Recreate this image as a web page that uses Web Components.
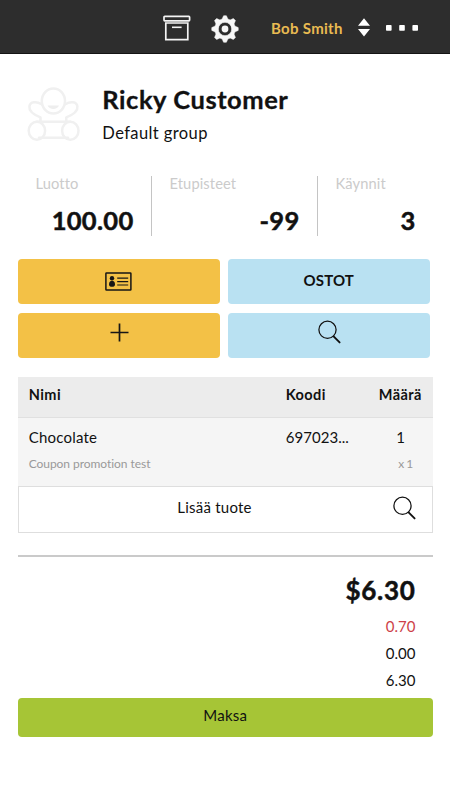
<!DOCTYPE html>
<html lang="fi"><head><meta charset="utf-8"><title>Ricky Customer</title>
<style>
html,body{margin:0;background:#fff}
body{width:450px;height:800px;overflow:hidden;font-family:Lato,"Liberation Sans",sans-serif;font-size:15px;color:#111}
</style></head><body>
<pos-app></pos-app>
<script>
const define=(name,html,setup)=>{
  const t=document.createElement('template');t.innerHTML=html;
  customElements.define(name,class extends HTMLElement{
    constructor(){super();this.attachShadow({mode:'open'}).append(t.content.cloneNode(true));}
    connectedCallback(){if(setup)setup(this,this.shadowRoot);}
  });
};
const icons={
  archive:[28,26,'<g fill="none" stroke="#f4f4f4"><rect x="1" y="1.4" width="25.6" height="4.4" rx=".8" stroke-width="1.7"/><path d="M2.8 8V24.6H24.8V8Z" stroke-width="1.7"/><path d="M9 12.3h9.6" stroke-width="1.6"/></g>'],
  gear:[28,28,'<path fill="#f7f7f7" stroke="#f7f7f7" stroke-width=".6" stroke-linejoin="round" fill-rule="evenodd" d="M11.2 4 12.6 .8h2.8L16.8 4l2.3 1 3.3-1.4 2 2-1.4 3.3 1 2.3 3.2 1.4v2.8L24 16.8l-1 2.3 1.4 3.3-2 2-3.3-1.4-2.3 1-1.4 3.2h-2.8L11.2 24l-2.3-1-3.3 1.4-2-2L5 19.1l-1-2.3L.8 15.4v-2.8L4 11.2l1-2.3L3.6 5.6l2-2L8.9 5ZM14 7.3a6.7 6.7 0 1 0 0 13.4a6.7 6.7 0 1 0 0-13.4Z"/><circle cx="14" cy="14" r="3.4" fill="#f7f7f7"/>'],
  sort:[12,19,'<path fill="#fff" d="M6 .3 12 7.8H0ZM0 11h12L6 18.4Z"/>'],
  dots:[33,6,'<g fill="#fff"><rect width="5.6" height="5.8" rx=".8"/><rect x="13.2" width="5.6" height="5.8" rx=".8"/><rect x="26.4" width="5.6" height="5.8" rx=".8"/></g>'],
  teddy:[54,58,'<g fill="none" stroke="#f0f0f0" stroke-width="2.5" stroke-linecap="round" stroke-linejoin="round"><ellipse cx="26.4" cy="15" rx="11.6" ry="12.6"/><path d="M14.6 18.2C9.5 15 3 15.5 2.4 20.5C1.8 25 7 28.8 13.5 31.3V35M38.2 18.2C43.3 15 49.8 15.5 50.4 20.5C51 25 45.8 28.8 39.3 31.3V35M9.5 35.8H43.2M12 51.8H41"/><ellipse cx="9.9" cy="44.7" rx="8.2" ry="9"/><ellipse cx="43.3" cy="44.7" rx="8.2" ry="9"/></g><path d="M20.6 19.5h11.4c-1.6 4.6-9.8 4.6-11.4 0Z" fill="#eee"/>'],
  card:[27,20,'<rect x=".9" y=".9" width="25" height="17.2" rx=".6" fill="none" stroke="#161616" stroke-width="1.5"/><g fill="#161616"><circle cx="7" cy="6.2" r="2.2"/><path d="M4 12.2C4 10 5.2 8.8 7 8.8S10 10 10 12.2C10 14.4 8.8 14.8 7 14.8S4 14.4 4 12.2Z"/></g><path d="M12.2 6.1h11M12.2 9.6h11M12.2 13h11" stroke="#161616" stroke-width="1.2"/>'],
  plus:[19,19,'<path d="M9.5.5v18M.5 9.5h18" stroke="#161616" stroke-width="1.7"/>'],
  search:[23,24,'<circle cx="9.5" cy="9.8" r="8.6" fill="none" stroke="#111" stroke-width="1.25"/><path d="m15.6 16.4 6 6" stroke="#111" stroke-width="1.9" stroke-linecap="round"/>']
};
define('ui-icon','<style>:host{display:block;flex:none;line-height:0}svg{display:block}</style><span></span>',(el,r)=>{
  const [w,h,p]=icons[el.getAttribute('name')];
  r.querySelector('span').innerHTML=`<svg width="${w}" height="${h}" viewBox="0 0 ${w} ${h}">${p}</svg>`;
});
define('top-bar',`<style>:host{display:flex;box-sizing:border-box;height:54px;background:#2d2d2d;border-bottom:1px solid #141414;padding-left:163px;align-items:flex-start}
.name{margin:18px 0 0 32px;width:77px;white-space:nowrap;font-weight:700;line-height:20px;letter-spacing:.3px;color:#e9bb52}
.a{margin-top:15px}.g{margin:15px 0 0 20px}.s{margin:18px 0 0 10px}.d{margin:25px 0 0 16px}</style>
<ui-icon class="a" name="archive"></ui-icon><ui-icon class="g" name="gear"></ui-icon><span class="name"><slot></slot></span><ui-icon class="s" name="sort"></ui-icon><ui-icon class="d" name="dots"></ui-icon>`);
define('customer-head',`<style>:host{display:flex;height:122px;box-sizing:border-box;padding:32px 0 0 27px;gap:21.3px}
h1{margin:-4px 0 0;font-size:25.5px;line-height:34px;letter-spacing:.55px;font-weight:700;-webkit-text-stroke:.3px #111}
p{margin:6px 0 0;font-size:16.5px;line-height:22px;letter-spacing:.4px}</style>
<ui-icon name="teddy"></ui-icon><div><h1><slot></slot></h1><p><slot name="group"></slot></p></div>`);
define('stat-cell',`<style>:host{display:block;box-sizing:border-box;height:60px;padding:0 17.5px 0 17.5px}
:host([divided]){border-right:1px solid #c4c4c4}
.l{font-size:14.7px;line-height:14px;color:#cbcbcb;letter-spacing:.1px}
.v{font-size:25.5px;line-height:32px;margin-top:14px;text-align:right;font-weight:700;letter-spacing:.3px;-webkit-text-stroke:.5px #111}</style>
<div class="l"></div><div class="v"><slot></slot></div>`,(el,r)=>{r.querySelector('.l').textContent=el.getAttribute('label');});
define('stat-row','<style>:host{display:grid;grid-template-columns:134px 166px 115px;padding-left:18px;height:83px;box-sizing:border-box}stat-cell{min-width:0}</style><slot></slot>');
define('action-button',`<style>:host{display:flex;justify-content:center;box-sizing:border-box;height:45px;border-radius:4px;background:#f3c146;padding-top:var(--pt,12px);font-weight:700;line-height:20px;letter-spacing:.15px}
:host([tone=blue]){background:#b9e1f2}
:host([tone=green]){height:39px;background:#a6c536;font-weight:400;letter-spacing:.3px}</style><slot></slot>`);
define('button-grid','<style>:host{display:grid;grid-template-columns:202.5px 202.5px;gap:9px 7.5px;padding:0 17.5px;height:118px;box-sizing:border-box;align-content:start}</style><slot></slot>');
define('product-table',`<style>:host{display:block;width:415.5px;box-sizing:border-box;margin-left:17.5px;height:156px}
.r{display:grid;grid-template-columns:257px 93px 1fr;padding-left:11.2px;box-sizing:border-box;white-space:nowrap}
.h{height:41px;background:#ececec;border-bottom:1px solid #e0e0e0;font-weight:700;font-size:14.5px;line-height:20px;padding-top:8px;letter-spacing:.45px}
.b{height:68px;background:#f5f5f5;padding-top:8px;letter-spacing:.22px;line-height:22px;align-content:start;row-gap:6px}
.q{text-align:center;width:44px}.s{font-size:12px;color:#999;line-height:20px;letter-spacing:-.05px}.s.q{width:54px;word-spacing:-1px}
.add{height:47px;border:1px solid #dedede;box-sizing:border-box;display:grid;grid-template-columns:1fr 39.5px;background:#fff}
.add span{text-align:center;padding:10px 0 0 18px;line-height:20px;letter-spacing:.22px}
ui-icon{margin-top:9px}</style>
<div class="r h"><span>Nimi</span><span>Koodi</span><span>Määrä</span></div>
<div class="r b"><span>Chocolate</span><span style="letter-spacing:.05px">697023...</span><span class="q">1</span><span class="s">Coupon promotion test</span><span></span><span class="s q">x 1</span></div>
<div class="add"><span>Lisää tuote</span><ui-icon name="search"></ui-icon></div>`);
define('order-total',`<style>:host{display:block;height:143px;box-sizing:border-box;margin:22px 17px 0 17.5px;border-top:2px solid #cacaca;padding:16px 17.5px 0;text-align:right;line-height:27px}
b{display:block;font-size:26px;line-height:34px;letter-spacing:.7px;margin-bottom:6px;-webkit-text-stroke:.5px #111}
.red{color:#cd3f49}</style>
<b><slot></slot></b><div class="red">0.70</div><div>0.00</div><div>6.30</div>`);
define('pos-app',`<style>:host{display:block;width:450px}action-button[tone=green]{margin:0 17px 0 17.5px}</style>
<top-bar>Bob Smith</top-bar>
<customer-head>Ricky Customer<span slot="group">Default group</span></customer-head>
<stat-row><stat-cell divided label="Luotto">100.00</stat-cell><stat-cell divided label="Etupisteet">-99</stat-cell><stat-cell label="Käynnit">3</stat-cell></stat-row>
<button-grid>
<action-button style="--pt:13px"><ui-icon name="card"></ui-icon></action-button>
<action-button tone="blue" style="--pt:11px">OSTOT</action-button>
<action-button style="--pt:9.5px"><ui-icon name="plus" style="margin-left:1px"></ui-icon></action-button>
<action-button tone="blue" style="--pt:7px"><ui-icon name="search" style="margin-left:1px"></ui-icon></action-button>
</button-grid>
<product-table></product-table>
<order-total>$6.30</order-total>
<action-button tone="green" style="--pt:7px">Maksa</action-button>`);
</script></body></html>
